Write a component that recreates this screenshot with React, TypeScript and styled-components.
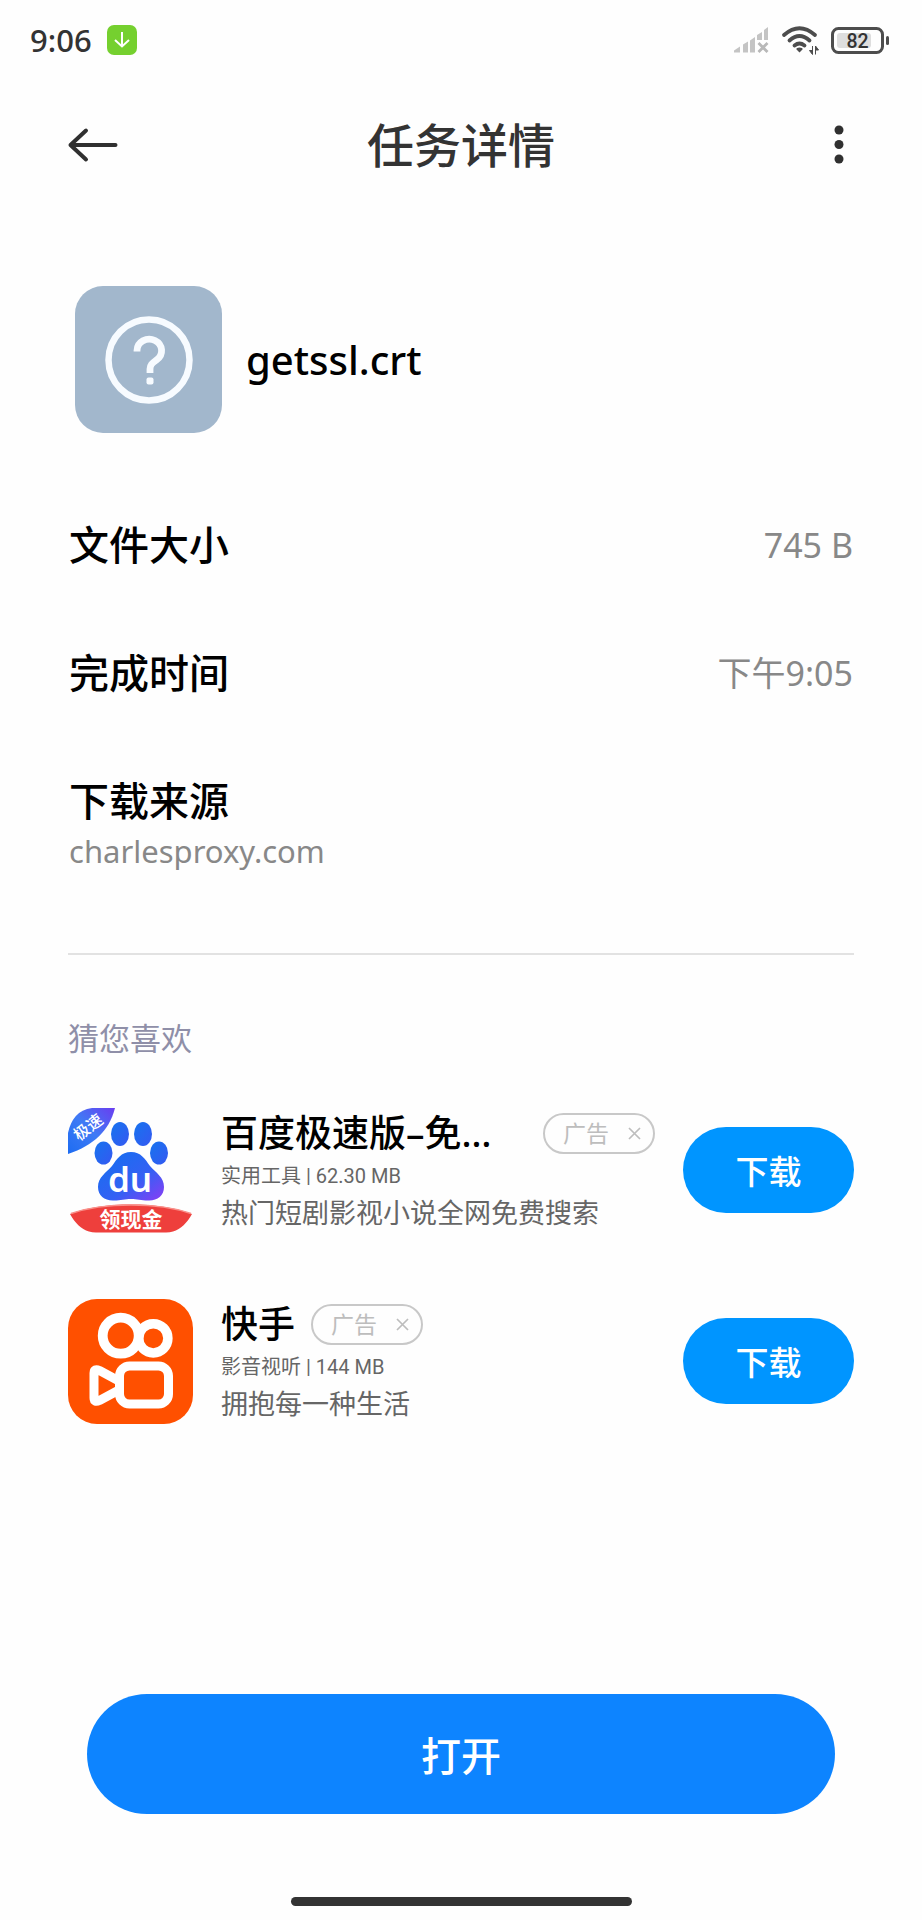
import React from "react";
import styled, { createGlobalStyle } from "styled-components";

const GlobalStyle = createGlobalStyle`
  * { box-sizing: border-box; }
  body {
    margin: 0;
    background: #fefefe;
    color: #000;
    font-family: "Noto Sans", "Noto Sans CJK SC", sans-serif;
  }
  button {
    padding: 0;
    border: 0;
    background: none;
    color: inherit;
    font: inherit;
    cursor: pointer;
  }
  h1, h2, h3, p, dl, dd, ul { margin: 0; padding: 0; font-weight: 400; }
  ul { list-style: none; }
  svg { display: block; flex: none; overflow: visible; }
`;

const Page = styled.div`
  display: flex;
  flex-direction: column;
  min-height: 100vh;
`;

const StatusBar = styled.div`
  display: flex;
  align-items: center;
  justify-content: space-between;
  height: 80px;
  padding: 0 32px 0 30px;
`;

const StatusGroup = styled.div<{ $gap: number }>`
  display: flex;
  align-items: center;
  gap: ${(p) => p.$gap}px;
`;

const Clock = styled.time`
  font-size: 31px;
  font-weight: 500;
  line-height: 40px;
  color: #333;
`;

const TopBar = styled.header`
  display: flex;
  align-items: center;
  justify-content: space-between;
  height: 130px;
  padding: 0 68px;
`;

const IconButton = styled.button<{ $align: string }>`
  display: flex;
  align-items: center;
  justify-content: ${(p) => p.$align};
  width: 50px;
  height: 50px;
`;

const Title = styled.h1`
  font-size: 47px;
  font-weight: 500;
  line-height: 64px;
  color: #333;
`;

const Content = styled.main`
  padding: 76px 68px 0;
`;

const FileHeader = styled.section`
  display: flex;
  align-items: center;
  gap: 24px;
  padding-left: 7px;
`;

const FileIcon = styled.div`
  display: flex;
  align-items: center;
  justify-content: center;
  width: 147px;
  height: 147px;
  border-radius: 28px;
  background: #a2b7cc;
`;

const FileName = styled.h2`
  font-size: 40px;
  font-weight: 500;
  line-height: 54px;
`;

const Details = styled.dl`
  padding: 48px 0 79px;
  border-bottom: 2px solid #e2e2e2;
`;

const DetailRow = styled.div<{ $stacked?: boolean }>`
  display: flex;
  flex-direction: ${(p) => (p.$stacked ? "column" : "row")};
  align-items: ${(p) => (p.$stacked ? "flex-start" : "center")};
  justify-content: space-between;
  padding: 37px 1px ${(p) => (p.$stacked ? 0 : 37)}px 1px;
`;

const DetailLabel = styled.dt`
  font-size: 40px;
  font-weight: 500;
  line-height: 54px;
`;

const DetailValue = styled.dd<{ $small?: boolean }>`
  font-size: ${(p) => (p.$small ? 31 : 34)}px;
  line-height: 46px;
  color: #888;
`;

const SectionTitle = styled.h2`
  padding: 60px 0 46px;
  font-size: 31px;
  line-height: 46px;
  color: #8f8fa8;
`;

const AdList = styled.ul`
  display: flex;
  flex-direction: column;
  gap: 65px;
`;

const AdItem = styled.li`
  display: flex;
  align-items: center;
  gap: 28px;
`;

const AdText = styled.div`
  flex: 1;
  min-width: 0;
`;

const AdTitleRow = styled.div`
  display: flex;
  align-items: center;
  gap: 16px;
`;

const AdName = styled.h3<{ $grow?: boolean }>`
  flex: ${(p) => (p.$grow ? 1 : "none")};
  font-size: 37px;
  font-weight: 500;
  line-height: 52px;
  white-space: nowrap;
`;

const AdBadge = styled.button`
  display: flex;
  align-items: center;
  justify-content: space-between;
  width: 112px;
  height: 41px;
  padding: 0 12px 0 18px;
  border: 2px solid #c8c8c8;
  border-radius: 21px;
  font-size: 23px;
  line-height: 36px;
  color: #bdbdbd;
`;

const AdMeta = styled.p`
  font-family: Roboto, "Noto Sans CJK SC", sans-serif;
  font-size: 20px;
  line-height: 34px;
  color: #666;
`;

const AdDescription = styled.p`
  font-size: 27px;
  line-height: 40px;
  color: #666;
  white-space: nowrap;
`;

const DownloadButton = styled.button`
  flex: none;
  width: 171px;
  height: 86px;
  border-radius: 43px;
  background: #0095ff;
  color: #fff;
  font-size: 33px;
  font-weight: 500;
`;

const Footer = styled.footer`
  display: flex;
  flex-direction: column;
  align-items: center;
  margin-top: auto;
  padding: 60px 87px 14px;
`;

const OpenButton = styled.button`
  width: 100%;
  height: 120px;
  border-radius: 60px;
  background: #0d84ff;
  color: #fff;
  font-size: 40px;
  font-weight: 500;
`;

const HomeBar = styled.div`
  width: 341px;
  height: 9px;
  margin-top: 83px;
  border-radius: 5px;
  background: #333;
`;

const DownloadBadgeIcon = () => (
  <svg width="30" height="30" viewBox="0 0 30 30" aria-hidden="true">
    <rect width="30" height="30" rx="7" fill="#75d02f" />
    <path d="M15 7v14.500M8 15l7 6.500 7-6.500" fill="none" stroke="#fff" strokeWidth="2" />
  </svg>
);

const SignalIcon = () => (
  <svg width="36" height="28" viewBox="0 0 36 28" aria-hidden="true">
    <g fill="#c4c4c4">
      <path d="M1 26.500v-2l6-4v6zM10 18.500l5-3v11h-5zM17 14.500l5-3.500v15.500h-5zM24 9l5-3v8h-5zM31 4l4-3v13h-4z" />
    </g>
    <path d="M25.500 17l9 9M34.500 17l-9 9" stroke="#b8b8b8" strokeWidth="2.800" />
  </svg>
);

const WifiIcon = () => (
  <svg width="38" height="30" viewBox="0 0 38 30" aria-hidden="true">
    <g fill="none" stroke="#4d4d4d" strokeWidth="3.800" strokeLinecap="round">
      <path d="M3 10Q18.500-3.500 34 10" />
      <path d="M8.500 15.500Q18.500 6.500 28.500 15.500" />
      <path d="M13.500 20.500Q18.500 16.500 23.500 20.500" />
    </g>
    <path d="M18.500 22.500c2 0 3.200.8 3.200 1.800L18.500 27.500l-3.200-3.200c0-1 1.200-1.800 3.200-1.800z" fill="#4d4d4d" />
    <path d="M31.500 21v8.500l-3-4h3M34.500 29.500V21l3 4h-3" fill="#4d4d4d" stroke="#4d4d4d" strokeWidth="1" />
  </svg>
);

const BatteryIcon = () => (
  <svg width="59" height="27" viewBox="0 0 59 27" aria-label="82%">
    <rect x="1.500" y="1.500" width="50" height="24" rx="6" fill="#fefefe" stroke="#4d4d4d" strokeWidth="3" />
    <rect x="6" y="6" width="34" height="15" rx="3" fill="#dedede" />
    <rect x="55" y="9" width="3" height="9" rx="1.500" fill="#4d4d4d" />
    <text x="26.500" y="20.500" textAnchor="middle" fontFamily="Roboto, sans-serif" fontSize="19.500" fontWeight="500" fill="#333">82</text>
  </svg>
);

const BackIcon = () => (
  <svg width="50" height="36" viewBox="0 0 50 36" aria-hidden="true">
    <path d="M18 3.500L2.500 18 18 32.500M2.500 18H47.500" fill="none" stroke="#303030" strokeWidth="4" strokeLinecap="round" strokeLinejoin="round" />
  </svg>
);

const MoreIcon = () => (
  <svg width="30" height="40" viewBox="0 0 30 40" aria-hidden="true">
    <g fill="#303030">
      <circle cx="15" cy="5" r="4.500" />
      <circle cx="15" cy="19.500" r="4.500" />
      <circle cx="15" cy="34" r="4.500" />
    </g>
  </svg>
);

const UnknownFileIcon = () => (
  <svg width="90" height="90" viewBox="0 0 90 90" aria-hidden="true">
    <g fill="none" stroke="#f7fbff">
      <circle cx="45" cy="45" r="40.500" strokeWidth="6.500" />
      <path d="M33 36.500v-1a12.300 11.500 0 1 1 19.500 9.500c-4 3-6.500 4.500-6.500 9v4" strokeWidth="6.800" />
    </g>
    <rect x="42.500" y="62.500" width="7" height="7" rx="2" fill="#f7fbff" />
  </svg>
);

const BaiduLogo = () => (
  <svg width="125" height="125" viewBox="0 0 125 125" role="img" aria-label="百度极速版">
    <defs>
      <linearGradient id="corner" x1="0" y1="1" x2="1" y2="0">
        <stop offset="0" stopColor="#1d6cf2" />
        <stop offset="0.500" stopColor="#3f7bf5" />
        <stop offset="1" stopColor="#6a3df0" />
      </linearGradient>
      <linearGradient id="pad" x1="0" y1="0" x2="1" y2="1">
        <stop offset="0.150" stopColor="#1a6df0" />
        <stop offset="0.600" stopColor="#3560f4" />
        <stop offset="1" stopColor="#8a3cf5" />
      </linearGradient>
      <linearGradient id="toe" x1="0" y1="0" x2="1" y2="1">
        <stop offset="0" stopColor="#1674ee" />
        <stop offset="1" stopColor="#3558f2" />
      </linearGradient>
    </defs>
    <path d="M0 46V25C3 11 10 2 24 0H47C41 23 26 37 0 46Z" fill="url(#corner)" />
    <text x="20" y="25" textAnchor="middle" transform="rotate(-38 20 19)" fontFamily="Noto Sans CJK SC, sans-serif" fontSize="16" fontWeight="500" fill="#fff">极速</text>
    <g fill="url(#toe)">
      <ellipse cx="52" cy="26" rx="9" ry="12" />
      <ellipse cx="75" cy="26" rx="9" ry="12" />
      <ellipse cx="35.500" cy="45" rx="9" ry="11.500" />
      <ellipse cx="91" cy="45" rx="9" ry="11.500" />
    </g>
    <path d="M63 44C73 44 77 51 82 58C88 65 96 69 96 79C96 88 89 93 80 92.500C73 92.500 69 91 63 91C57 91 53 92.500 46 92.500C37 93 30 88 30 79C30 69 38 65 44 58C49 51 53 44 63 44Z" fill="url(#pad)" />
    <text x="62" y="84" textAnchor="middle" fontFamily="Noto Sans, sans-serif" fontSize="35" fontWeight="600" fill="#fff">du</text>
    <path d="M2 106C20 99 40 96.500 63 96.500S106 99 124 106C119 115 113 121 105 123.500Q102 124.500 98 124.500H28Q24 124.500 21 123.500C13 121 7 115 2 106Z" fill="#ee3f3c" />
    <path d="M3 105.500C22 99 42 97 63 97S104 99 123 105.500" fill="none" stroke="#f9908a" strokeWidth="1.500" />
    <text x="63" y="119" textAnchor="middle" fontFamily="Noto Sans CJK SC, sans-serif" fontSize="21" fontWeight="700" fill="#fff">领现金</text>
  </svg>
);

const KuaishouLogo = () => (
  <svg width="125" height="125" viewBox="0 0 125 125" role="img" aria-label="快手">
    <rect width="125" height="125" rx="29" fill="#ff5000" />
    <g fill="none" stroke="#fff" strokeWidth="9" strokeLinejoin="round">
      <circle cx="52.700" cy="36.700" r="18" strokeWidth="9.800" />
      <circle cx="85.300" cy="39.300" r="14.600" strokeWidth="9.500" />
      <rect x="51.500" y="67" width="49" height="38" rx="10" />
      <path d="M50 81.500L31.500 71.500Q26 69 26 74V99Q26 104 31.500 101.500L50 91.500" />
    </g>
  </svg>
);

const CloseIcon = () => (
  <svg width="13" height="13" viewBox="0 0 13 13" aria-hidden="true">
    <path d="M1 1l11 11M12 1L1 12" stroke="#bdbdbd" strokeWidth="1.700" />
  </svg>
);

interface Ad {
  name: string;
  truncated?: boolean;
  meta: string;
  description: string;
  logo: React.ReactNode;
}

const ads: Ad[] = [
  {
    name: "百度极速版–免…",
    truncated: true,
    meta: "实用工具 | 62.30 MB",
    description: "热门短剧影视小说全网免费搜索",
    logo: <BaiduLogo />,
  },
  {
    name: "快手",
    meta: "影音视听 | 144 MB",
    description: "拥抱每一种生活",
    logo: <KuaishouLogo />,
  },
];

export default function App() {
  return (
    <Page lang="zh-CN">
      <GlobalStyle />
      <StatusBar>
        <StatusGroup $gap={15}>
          <Clock>9:06</Clock>
          <DownloadBadgeIcon />
        </StatusGroup>
        <StatusGroup $gap={12}>
          <SignalIcon />
          <WifiIcon />
          <BatteryIcon />
        </StatusGroup>
      </StatusBar>
      <TopBar>
        <IconButton $align="flex-start" aria-label="返回">
          <BackIcon />
        </IconButton>
        <Title>任务详情</Title>
        <IconButton $align="flex-end" aria-label="更多">
          <MoreIcon />
        </IconButton>
      </TopBar>
      <Content>
        <FileHeader>
          <FileIcon>
            <UnknownFileIcon />
          </FileIcon>
          <FileName>getssl.crt</FileName>
        </FileHeader>
        <Details>
          <DetailRow>
            <DetailLabel>文件大小</DetailLabel>
            <DetailValue>745 B</DetailValue>
          </DetailRow>
          <DetailRow>
            <DetailLabel>完成时间</DetailLabel>
            <DetailValue>下午9:05</DetailValue>
          </DetailRow>
          <DetailRow $stacked>
            <DetailLabel>下载来源</DetailLabel>
            <DetailValue $small>charlesproxy.com</DetailValue>
          </DetailRow>
        </Details>
        <SectionTitle>猜您喜欢</SectionTitle>
        <AdList>
          {ads.map((ad) => (
            <AdItem key={ad.name}>
              {ad.logo}
              <AdText>
                <AdTitleRow>
                  <AdName $grow={ad.truncated}>{ad.name}</AdName>
                  <AdBadge>
                    广告
                    <CloseIcon />
                  </AdBadge>
                </AdTitleRow>
                <AdMeta>{ad.meta}</AdMeta>
                <AdDescription>{ad.description}</AdDescription>
              </AdText>
              <DownloadButton>下载</DownloadButton>
            </AdItem>
          ))}
        </AdList>
      </Content>
      <Footer>
        <OpenButton>打开</OpenButton>
        <HomeBar />
      </Footer>
    </Page>
  );
}
